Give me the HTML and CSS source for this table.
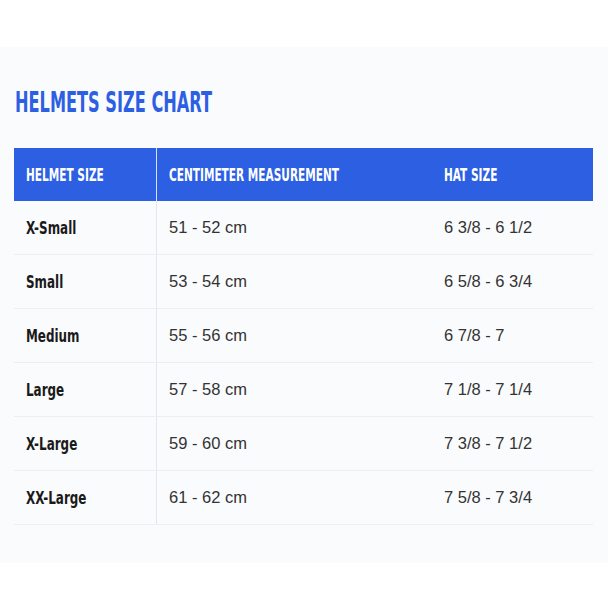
FILE: index.html
```html
<!DOCTYPE html>
<html>
<head>
<meta charset="utf-8">
<link rel="stylesheet" href="styles.css">
</head>
<body>
<div class="panel">
  <h1 class="title"><span class="cond">HELMETS SIZE CHART</span></h1>
  <table class="chart">
    <thead>
      <tr><th class="c1"><span class="cond">HELMET SIZE</span></th><th class="c2"><span class="cond">CENTIMETER MEASUREMENT</span></th><th class="c3"><span class="cond">HAT SIZE</span></th></tr>
    </thead>
    <tbody>
      <tr><td class="c1"><span class="cond">X-Small</span></td><td class="c2">51 - 52 cm</td><td class="c3">6 3/8 - 6 1/2</td></tr>
      <tr><td class="c1"><span class="cond">Small</span></td><td class="c2">53 - 54 cm</td><td class="c3">6 5/8 - 6 3/4</td></tr>
      <tr><td class="c1"><span class="cond">Medium</span></td><td class="c2">55 - 56 cm</td><td class="c3">6 7/8 - 7</td></tr>
      <tr><td class="c1"><span class="cond">Large</span></td><td class="c2">57 - 58 cm</td><td class="c3">7 1/8 - 7 1/4</td></tr>
      <tr><td class="c1"><span class="cond">X-Large</span></td><td class="c2">59 - 60 cm</td><td class="c3">7 3/8 - 7 1/2</td></tr>
      <tr><td class="c1"><span class="cond">XX-Large</span></td><td class="c2">61 - 62 cm</td><td class="c3">7 5/8 - 7 3/4</td></tr>
    </tbody>
  </table>
</div>
</body>
</html>
```
FILE: styles.css
```css
html, body { margin: 0; padding: 0; background: #ffffff; }
.panel {
  margin-top: 47px;
  height: 516px;
  box-sizing: border-box;
  background: #fafbfd;
  padding: 38px 15px 0 14px;
}
.cond {
  display: inline-block;
  transform-origin: left center;
  white-space: nowrap;
}
.title {
  margin: 0 0 0 1px;
  font-family: "DejaVu Sans Condensed", "DejaVu Sans", sans-serif;
  font-weight: bold;
  font-size: 29px;
  line-height: 34px;
  color: #2d5fe3;
}
.title .cond { transform: scaleX(0.62); }
.chart {
  margin-top: 29px;
  width: 579px;
  border-collapse: collapse;
  table-layout: fixed;
}
.chart th {
  background: #2d5fe3;
  color: #ffffff;
  height: 53px;
  padding: 0 0 0 12px;
  text-align: left;
  font-family: "DejaVu Sans Condensed", "DejaVu Sans", sans-serif;
  font-weight: bold;
  font-size: 17px;
}
.chart th .cond { transform: scaleX(0.69); }
.chart td {
  height: 53px;
  padding: 0 0 0 12px;
  border-bottom: 1px solid #eceef2;
  font-family: "Liberation Sans", Arial, sans-serif;
  font-size: 16.5px;
  color: #333333;
}
.chart td.c1 {
  font-family: "DejaVu Sans Condensed", "DejaVu Sans", sans-serif;
  font-weight: bold;
  font-size: 17px;
  color: #1a1a1a;
}
.chart td.c1 .cond { transform: scaleX(0.78); }
.chart .c1 { width: 130px; border-right: 1px solid #e3e6ea; }
.chart th.c1 { border-right: 1px solid #d8e0f8; }
.chart .c2 { width: 263px; }
.chart .c3 { width: auto; }
```
